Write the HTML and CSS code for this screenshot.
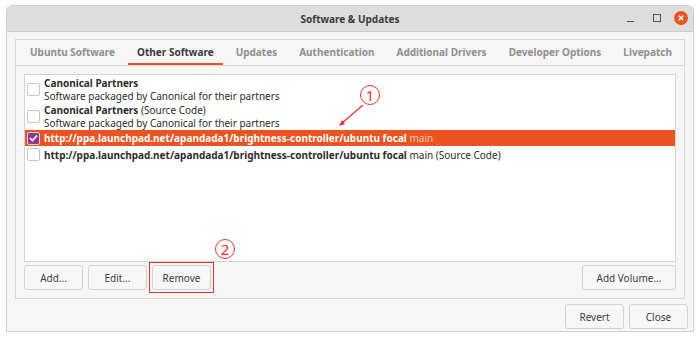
FILE: index.html
```html
<!DOCTYPE html>
<html lang="en">
<head>
    <meta charset="UTF-8">
    <title>Software &amp; Updates</title>
    <link rel="stylesheet" href="styles.css">
</head>
<body>
    <div class="window">
        <div class="titlebar">
            <span class="title">Software &amp; Updates</span>
            <div class="win-buttons">
                <span class="wb-min"></span>
                <span class="wb-max"></span>
                <span class="wb-close">
                    <svg width="14" height="14" viewBox="0 0 14 14">
                        <circle cx="7" cy="7" r="7" fill="#e95420"/>
                        <path d="M4.8 4.8 L9.2 9.2 M9.2 4.8 L4.8 9.2" stroke="#fff" stroke-width="1.3"/>
                    </svg>
                </span>
            </div>
        </div>
        <div class="content">
            <div class="notebook">
                <div class="tabs">
                    <span class="tab">Ubuntu Software</span>
                    <span class="tab active">Other Software</span>
                    <span class="tab">Updates</span>
                    <span class="tab">Authentication</span>
                    <span class="tab">Additional Drivers</span>
                    <span class="tab">Developer Options</span>
                    <span class="tab">Livepatch</span>
                </div>
                <div class="page">
                    <div class="list">
                        <div class="row two">
                            <span class="check"></span>
                            <div class="txt">
                                <div><b>Canonical Partners</b></div>
                                <div>Software packaged by Canonical for their partners</div>
                            </div>
                        </div>
                        <div class="row two">
                            <span class="check"></span>
                            <div class="txt">
                                <div><b>Canonical Partners</b> (Source Code)</div>
                                <div>Software packaged by Canonical for their partners</div>
                            </div>
                        </div>
                        <div class="row selected">
                            <span class="check on">
                                <svg width="9" height="8" viewBox="0 0 9 8"><path d="M1 4 L3.5 6.5 L8 1.5" fill="none" stroke="#fff" stroke-width="1.6"/></svg>
                            </span>
                            <div class="txt"><b>http://ppa.launchpad.net/apandada1/brightness-controller/ubuntu focal</b> <span class="dim">main</span></div>
                        </div>
                        <div class="row">
                            <span class="check"></span>
                            <div class="txt"><b>http://ppa.launchpad.net/apandada1/brightness-controller/ubuntu focal</b> main (Source Code)</div>
                        </div>
                    </div>
                    <div class="list-buttons">
                        <button class="btn">Add...</button>
                        <button class="btn">Edit...</button>
                        <button class="btn marked">Remove</button>
                        <span class="spacer"></span>
                        <button class="btn wide">Add Volume...</button>
                    </div>
                </div>
            </div>
            <div class="dialog-buttons">
                <button class="btn">Revert</button>
                <button class="btn">Close</button>
            </div>
        </div>
    </div>

    <!-- annotations drawn over the screenshot -->
    <div class="badge badge-1">1</div>
    <div class="badge badge-2">2</div>
    <svg class="arrow" width="40" height="30" viewBox="0 0 40 30">
        <path d="M26 2 L4 21" stroke="#f0302a" stroke-width="1.2" fill="none"/>
        <path d="M2 23 L5 17 L8 21 Z" fill="#f0302a"/>
    </svg>
</body>
</html>
```

FILE: styles.css
```css
body {
    margin: 0;
    background-color: #ffffff;
    font-family: "Noto Sans", "DejaVu Sans", sans-serif;
    font-size: 10px;
    color: #3c3c3c;
}
.window {
    margin: 5px 0 0 6px;
    width: 686px;
    height: 325px;
    border: 1px solid #cfcfcf;
    border-radius: 6px 6px 0 0;
    background-color: #f6f6f6;
    overflow: hidden;
}
.titlebar {
    height: 25px;
    background-color: #dddddd;
    border-bottom: 1px solid #cbcbcb;
    display: flex;
    align-items: center;
    justify-content: center;
    position: relative;
}
.title {
    font-weight: bold;
    font-size: 10px;
    color: #3a3a3a;
}
.win-buttons {
    position: absolute;
    right: 5px;
    top: 5px;
    display: flex;
    align-items: center;
    gap: 11px;
}
.wb-min {
    width: 7px;
    height: 1px;
    background-color: #555;
    margin-top: 6px;
}
.wb-max {
    width: 6px;
    height: 6px;
    border: 1px solid #555;
    margin-left: 8px;
    margin-right: 2px;
}
.wb-close svg {
    display: block;
}
.content {
    padding: 7px 8px 0 8px;
}
.notebook {
    border: 1px solid #d9d9d9;
    height: 258px;
}
.tabs {
    height: 25px;
    display: flex;
    border-bottom: 1px solid #d9d9d9;
    padding-left: 5px;
}
.tab {
    padding: 0 9px;
    font-weight: bold;
    color: #8f8f8f;
    line-height: 25px;
    margin-right: 4px;
    white-space: nowrap;
}
.tab.active {
    color: #3a3a3a;
    box-shadow: inset 0 -2px 0 #e95420;
}
.page {
    padding: 8px 8px 0 8px;
}
.list {
    box-sizing: border-box;
    height: 188px;
    background-color: #ffffff;
    border: 1px solid #d4d4d4;
    padding-top: 1px;
}
.row {
    display: flex;
    align-items: center;
    height: 17px;
    padding-left: 2px;
    color: #2c2c2c;
    white-space: nowrap;
}
.row.two {
    height: 27px;
}
.row.two .txt {
    line-height: 13px;
}
.row.selected {
    background-color: #e95420;
    color: #ffffff;
    height: 16px;
}
.dim {
    color: #f8c9b6;
}
.check {
    width: 11px;
    height: 11px;
    border: 1px solid #c4c4c4;
    border-radius: 2px;
    background-color: #ffffff;
    margin-right: 4px;
    flex-shrink: 0;
    display: flex;
    align-items: center;
    justify-content: center;
}
.check.on {
    background-color: #8c3e8d;
    border-color: #f3d1d9;
}
.check svg {
    display: block;
}
.list-buttons {
    display: flex;
    gap: 5px;
    margin-top: 3px;
}
.spacer {
    flex: 1;
}
.btn {
    font-family: "Noto Sans", "DejaVu Sans", sans-serif;
    font-size: 10px;
    color: #3c3c3c;
    background-color: #f7f7f7;
    border: 1px solid #d2d2d2;
    border-radius: 3px;
    height: 25px;
    width: 59px;
    padding: 0;
}
.btn.wide {
    width: 94px;
}
.btn.marked {
    position: relative;
}
.btn.marked::after {
    content: "";
    position: absolute;
    left: -4px;
    top: -4px;
    right: -4px;
    bottom: -4px;
    border: 1.6px solid #f0302a;
}
.dialog-buttons {
    display: flex;
    justify-content: flex-end;
    gap: 5px;
    margin-top: 5px;
    margin-right: -3px;
}
.badge {
    position: absolute;
    width: 18px;
    height: 18px;
    border: 1.3px solid #f0302a;
    border-radius: 50%;
    color: #f0302a;
    font-size: 15px;
    line-height: 18px;
    text-align: center;
}
.badge-1 {
    left: 360px;
    top: 85px;
}
.badge-2 {
    left: 215px;
    top: 239px;
}
.arrow {
    position: absolute;
    left: 337px;
    top: 103px;
}
```
